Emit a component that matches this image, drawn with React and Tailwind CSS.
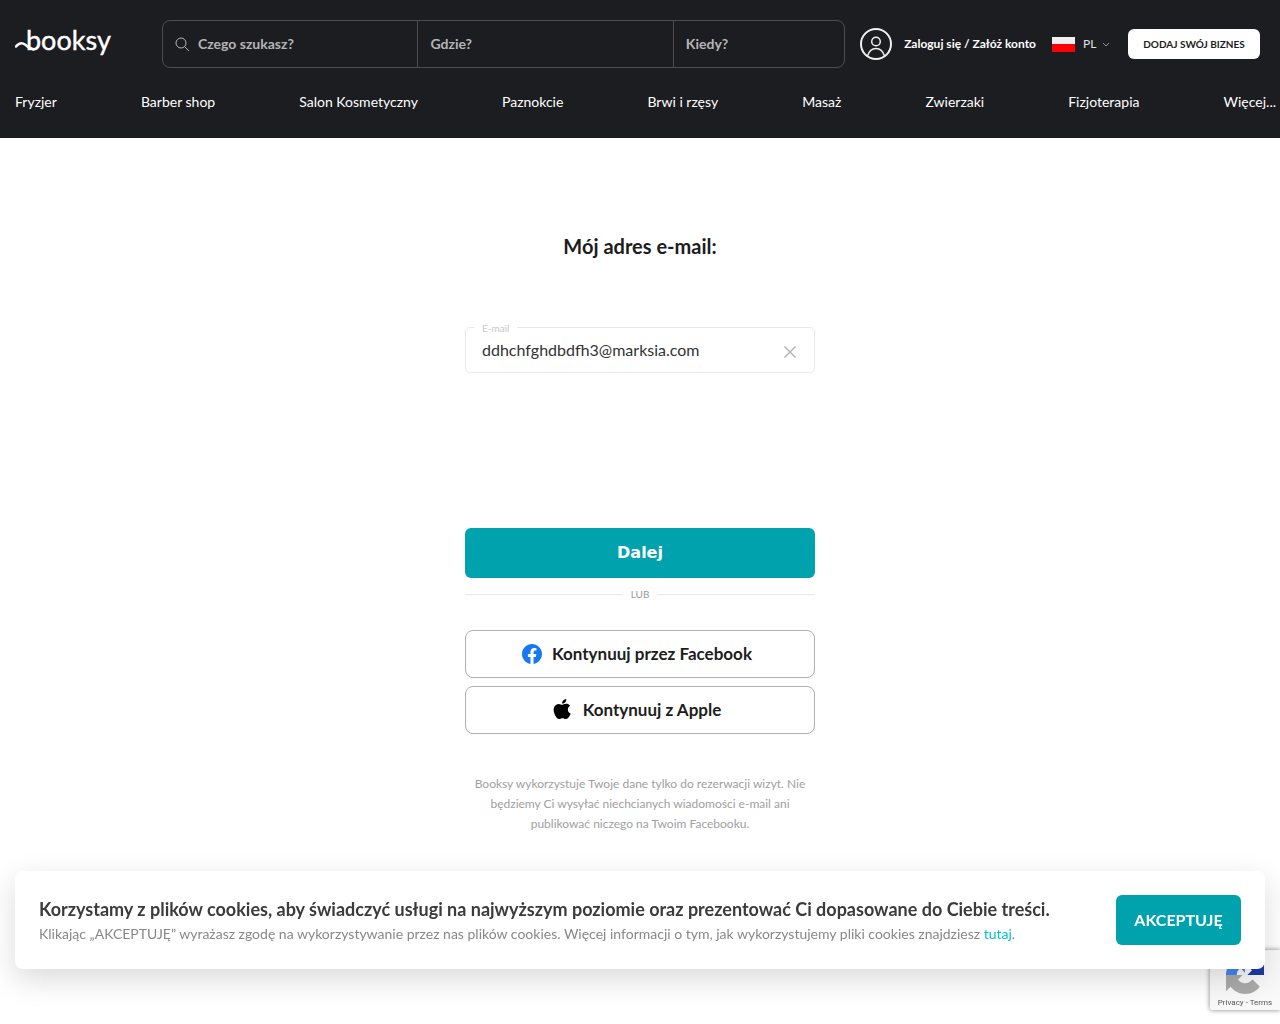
import React, { useState } from "react";

const CATEGORIES = [
  "Fryzjer",
  "Barber shop",
  "Salon Kosmetyczny",
  "Paznokcie",
  "Brwi i rzęsy",
  "Masaż",
  "Zwierzaki",
  "Fizjoterapia",
  "Więcej..."
];

const Logo = () => (
  <a href="#" aria-label="booksy" className="shrink-0">
    <svg width="97" height="40" viewBox="0 0 97 40" fill="none">
      <path d="M1 22.500C3.500 19.500 6.500 18 10 20.500C12.500 22.300 14 25.300 18.500 25.500" stroke="#fff" strokeWidth="2.500" strokeLinecap="round" />
      <text x="11" y="26" fill="#fff" stroke="#fff" strokeWidth="0.400" fontSize="27" className="font-['Lato',sans-serif] font-normal">booksy</text>
    </svg>
  </a>
);

const SearchBar = () => (
  <form role="search" className="grid h-12 min-w-0 flex-1 grid-cols-[3fr_3fr_2fr] rounded-lg border border-[#4c4d50] text-sm font-bold">
    <label className="flex min-w-0 items-center gap-2 border-r border-[#4c4d50] px-3">
      <svg width="15" height="15" viewBox="0 0 15 15" fill="none" stroke="#b5b5b5" className="shrink-0">
        <circle cx="6" cy="6" r="5" />
        <path d="M9.600 9.600L14 14" />
      </svg>
      <input placeholder="Czego szukasz?" className="w-full min-w-0 bg-transparent outline-none placeholder:text-[#b5b5b5]" />
    </label>
    <input aria-label="Gdzie?" placeholder="Gdzie?" className="min-w-0 border-r border-[#4c4d50] bg-transparent px-3 outline-none placeholder:text-[#b5b5b5]" />
    <input aria-label="Kiedy?" placeholder="Kiedy?" className="min-w-0 bg-transparent px-3 outline-none placeholder:text-[#b5b5b5]" />
  </form>
);

const Header = () => (
  <header className="h-[138px] bg-[#1c1d21] pt-5 text-white">
    <div className="flex h-12 items-center pr-5 pl-[15px]">
      <Logo />
      <div className="ml-[50px] flex min-w-0 flex-1">
        <SearchBar />
      </div>
      <a href="#" className="ml-[15px] flex items-center gap-3 text-xs font-bold whitespace-nowrap">
        <svg width="32" height="32" viewBox="0 0 32 32" fill="none" stroke="#f0f0f0">
          <circle cx="16" cy="16" r="15" strokeWidth="2" />
          <circle cx="16" cy="13.500" r="4.300" strokeWidth="1.500" />
          <path d="M7.500 28C9 23 12 20.500 16 20.500S23 23 24.500 28" strokeWidth="1.500" />
        </svg>
        Zaloguj się / Załóż konto
      </a>
      <label className="ml-4 flex items-center text-xs text-[#e0e0e0]">
        <svg width="23" height="15" viewBox="0 0 23 15" className="mr-2">
          <rect width="23" height="7" fill="#f0f0f0" />
          <rect y="7" width="23" height="8" fill="#f00" />
        </svg>
        <select aria-label="Język" className="w-[19px] appearance-none bg-transparent outline-none">
          <option>PL</option>
        </select>
        <svg width="8" height="8" viewBox="0 0 8 8" fill="none" stroke="#999">
          <path d="M1 3L4 6L7 3" />
        </svg>
      </label>
      <button className="ml-[18px] h-[30px] w-[132px] rounded-md bg-white text-[10px] font-bold text-[#1c1d21]">DODAJ SWÓJ BIZNES</button>
    </div>
    <nav className="mt-6 flex justify-between pr-1 pl-[15px] text-sm leading-5 whitespace-nowrap">
      {CATEGORIES.map((name) => (
        <a key={name} href="#">{name}</a>
      ))}
    </nav>
  </header>
);

const LoginForm = () => {
  const [email, setEmail] = useState("ddhchfghdbdfh3@marksia.com");

  return (
    <main className="mx-auto w-full max-w-[350px] pt-24">
      <h1 className="text-center text-xl leading-6 font-bold text-[#1c1d21]">Mój adres e-mail:</h1>

      <div className="relative mt-[69px] flex h-[46px] items-center rounded-[5px] border border-[#e8e8e8] px-4">
        <label htmlFor="email" className="absolute -top-1.5 left-2 bg-white px-2 text-[10px] leading-3 text-[#c8c8c8]">E-mail</label>
        <input
          id="email"
          value={email}
          onChange={(e) => setEmail(e.target.value)}
          className="min-w-0 flex-1 text-base text-[#333] outline-none"
        />
        <button type="button" aria-label="Wyczyść" onClick={() => setEmail("")} className="mt-1 p-0.5">
          <svg width="12" height="12" viewBox="0 0 12 12" stroke="#b0b0b0" strokeWidth="1.300">
            <path d="M0.500 0.500L11.500 11.500M11.500 0.500L0.500 11.500" />
          </svg>
        </button>
      </div>

      <button className="mt-[155px] h-[50px] w-full rounded-md bg-[#00a3ad] font-['DejaVu_Sans',sans-serif] text-base font-bold text-white">Dalej</button>

      <div className="mt-2.5 flex items-center gap-2 text-[10px] leading-3 text-[#999]">
        <span className="h-px flex-1 bg-[#e8e8e8]" />
        LUB
        <span className="h-px flex-1 bg-[#e8e8e8]" />
      </div>

      <div className="mt-[30px] flex flex-col gap-2 text-[17px] font-bold text-[#1c1d21]">
        <button className="flex h-12 items-center justify-center gap-2.5 rounded-lg border border-[#b0b0b0] pr-1.5">
          <svg width="20" height="20" viewBox="0 0 24 24">
            <path fill="#1877f2" d="M24 12.073c0-6.627-5.373-12-12-12s-12 5.373-12 12c0 5.990 4.388 10.954 10.125 11.854v-8.385H7.078v-3.470h3.047V9.430c0-3.007 1.792-4.669 4.533-4.669 1.312 0 2.686.235 2.686.235v2.953H15.830c-1.491 0-1.956.925-1.956 1.874v2.250h3.328l-.532 3.470h-2.796v8.385C19.612 23.027 24 18.062 24 12.073z" />
          </svg>
          Kontynuuj przez Facebook
        </button>
        <button className="flex h-12 items-center justify-center gap-2.5 rounded-lg border border-[#b0b0b0] pr-1.5">
          <svg width="20" height="20" viewBox="1.500 0 23 24" preserveAspectRatio="none" className="mb-0.5">
            <path d="M12.152 6.896c-.948 0-2.415-1.078-3.960-1.040-2.040.027-3.910 1.183-4.961 3.014-2.117 3.675-.546 9.103 1.519 12.090 1.013 1.454 2.208 3.090 3.792 3.039 1.520-.065 2.090-.987 3.935-.987 1.831 0 2.350.987 3.960.948 1.637-.026 2.676-1.480 3.676-2.948 1.156-1.688 1.636-3.325 1.662-3.415-.039-.013-3.182-1.221-3.220-4.857-.026-3.040 2.480-4.494 2.597-4.559-1.429-2.090-3.623-2.324-4.390-2.376-2-.156-3.675 1.090-4.610 1.090zM15.530 3.830c.843-1.012 1.400-2.427 1.245-3.830-1.207.052-2.662.805-3.532 1.818-.780.896-1.454 2.338-1.273 3.714 1.338.104 2.715-.688 3.559-1.701" />
          </svg>
          Kontynuuj z Apple
        </button>
      </div>

      <p className="mt-10 px-2 text-center text-xs leading-5 text-[#a0a0a0]">
        Booksy wykorzystuje Twoje dane tylko do rezerwacji wizyt. Nie będziemy Ci wysyłać niechcianych wiadomości e-mail ani publikować niczego na Twoim Facebooku.
      </p>
    </main>
  );
};

const RecaptchaBadge = () => (
  <div className="fixed right-0 bottom-3.5 flex h-[60px] w-[70px] flex-col items-center rounded-l-xs bg-[#f9f9f9] pt-1.5 shadow-[0_0_5px_gray]">
    <svg width="38" height="38" viewBox="0 0 64 64" className="shrink-0">
      <path fill="#1c3aa9" d="M64 31.955V4.537l-7.580 7.580C50.217 4.524 40.779 0 31.962 0v18.100c5.600 0 9.500 3 11.700 6.400l-7.700 7.500z" />
      <path fill="#4285f4" d="M31.862 0H4.442l7.580 7.580C4.429 13.782 0 23 0 32h18c0-5.600 3-9.500 6.400-11.700l7.500 7.700z" />
      <path fill="#ababab" d="M0 32v27.400l7.580-7.580C13.782 59.420 23 64 32 64c10.500 0 19-4.600 25-12.200L44.500 39.200c-3 5-7.500 6.700-12.500 6.700-5.600 0-9.500-3-11.700-6.300L28 32z" />
    </svg>
    <p className="font-['Roboto',sans-serif] text-[8px] leading-[18px] whitespace-nowrap text-[#555]">
      <a href="#">Privacy</a> - <a href="#">Terms</a>
    </p>
  </div>
);

const CookieBar = () => (
  <section className="fixed inset-x-[15px] bottom-[55px] flex items-center justify-between gap-6 rounded-lg bg-white p-6 shadow-[0_10px_30px_rgba(0,0,0,0.15)]">
    <div>
      <h2 className="text-lg leading-7 font-bold text-[#3b3b3b]">
        Korzystamy z plików cookies, aby świadczyć usługi na najwyższym poziomie oraz prezentować Ci dopasowane do Ciebie treści.
      </h2>
      <p className="text-sm leading-[22px] text-[#888]">
        Klikając „AKCEPTUJĘ” wyrażasz zgodę na wykorzystywanie przez nas plików cookies. Więcej informacji o tym, jak wykorzystujemy pliki cookies znajdziesz <a href="#" className="text-[#00c1c7]">tutaj</a>.
      </p>
    </div>
    <button className="h-[50px] w-[125px] shrink-0 rounded-md bg-[#00a3ad] text-base font-bold text-white">AKCEPTUJĘ</button>
  </section>
);

const App = () => (
  <div className="min-h-screen bg-white font-['Lato',sans-serif]">
    <Header />
    <LoginForm />
    <RecaptchaBadge />
    <CookieBar />
  </div>
);

export default App;
